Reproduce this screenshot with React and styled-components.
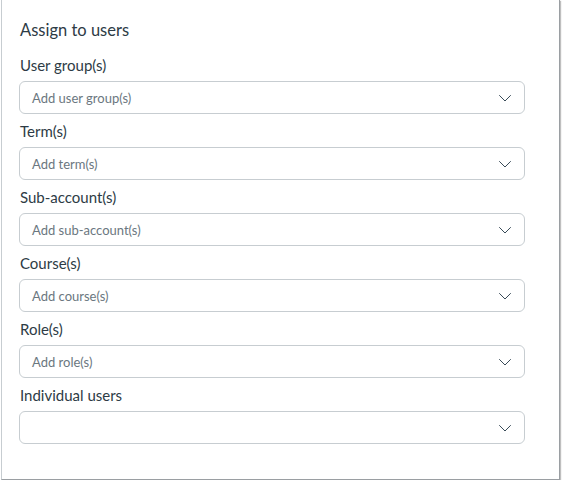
import styled, { createGlobalStyle } from "styled-components";

const GlobalStyle = createGlobalStyle`
   body {
      margin: 0;
      background: #ffffff;
      font-family: 'Lato', 'Liberation Sans', sans-serif;
   }
`

const Card = styled.div`
   box-sizing: border-box;
   width: 559px;
   height: 480px;
   margin-left: 1px;
   padding: 20px 33px 0 17px;
   background: #ffffff;
   border: 1px solid #c7cdd1;
   border-top: none;
   border-right-color: #9a9ea2;
   border-bottom-color: #9a9ea2;
   box-shadow: 1px 1px 1px rgba(0, 0, 0, 0.25);
`

const Title = styled.h2`
   margin: 0 0 15px 1px;
   font-size: 16.5px;
   font-weight: 400;
   line-height: 20px;
   color: #2d3b45;
`

const Field = styled.div`
   display: flex;
   flex-direction: column;
   gap: 6px;
   margin-bottom: 7px;
`

const Label = styled.label`
   margin-left: 1px;
   font-size: 15px;
   line-height: 20px;
   color: #2d3b45;
`

const SelectBox = styled.div`
   box-sizing: border-box;
   display: flex;
   align-items: center;
   justify-content: space-between;
   width: 506px;
   height: 33px;
   padding: 0 12px 0 12px;
   border: 1px solid #c7cdd1;
   border-radius: 6px;
   background: #ffffff;
`

const Placeholder = styled.span`
   font-size: 13px;
   color: #6b7780;
`

const Chevron = () => (
   <svg width="14" height="8" viewBox="0 0 14 8" fill="none">
      <path d="M1.5 1.5 L7 7 L12.5 1.5" stroke="#394b58" strokeWidth="1" strokeLinecap="round" strokeLinejoin="round" />
   </svg>
)

const fields = [
   { label: "User group(s)", placeholder: "Add user group(s)" },
   { label: "Term(s)", placeholder: "Add term(s)" },
   { label: "Sub-account(s)", placeholder: "Add sub-account(s)" },
   { label: "Course(s)", placeholder: "Add course(s)" },
   { label: "Role(s)", placeholder: "Add role(s)" },
   { label: "Individual users", placeholder: "" },
]

export default function App() {
   return (
      <>
         <GlobalStyle />
         <Card>
            <Title>Assign to users</Title>
            {fields.map((f) => (
               <Field key={f.label}>
                  <Label>{f.label}</Label>
                  <SelectBox>
                     <Placeholder>{f.placeholder}</Placeholder>
                     <Chevron />
                  </SelectBox>
               </Field>
            ))}
         </Card>
      </>
   );
}
